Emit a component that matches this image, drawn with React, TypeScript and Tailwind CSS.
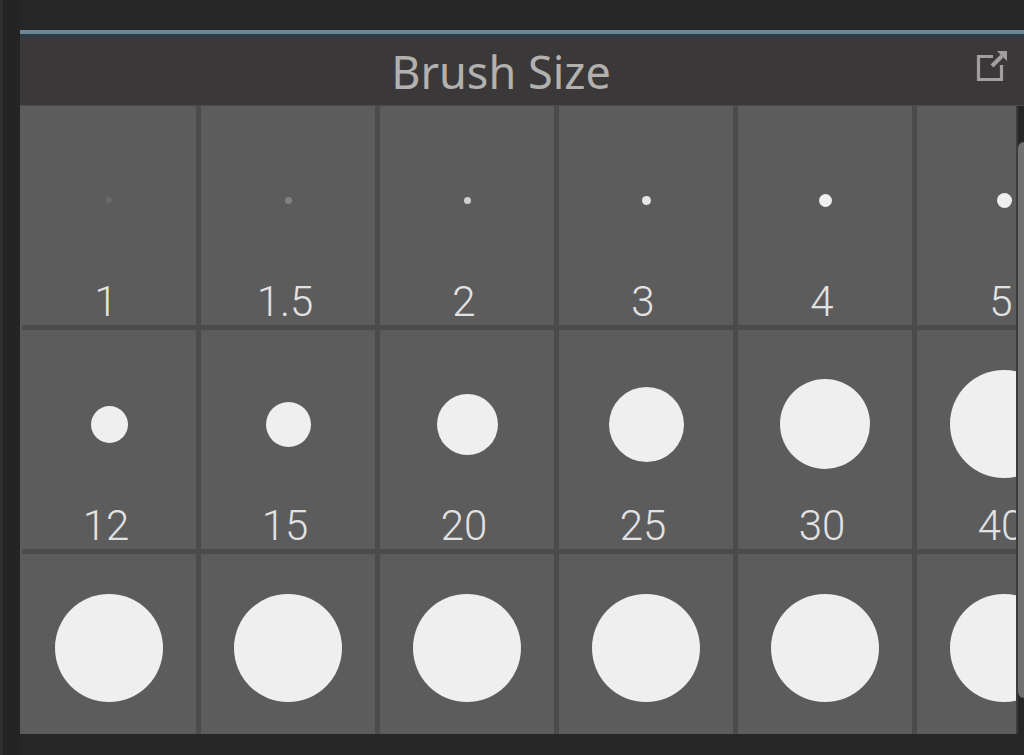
import React, { useState } from "react";

interface BrushPreset {
  id: string;
  label?: string;
  dot: string;
}

const presets: BrushPreset[] = [
  { id: "1", label: "1", dot: "size-[6px] bg-[#6c6c6c]" },
  { id: "1.5", label: "1.5", dot: "size-[7px] bg-[#828282]" },
  { id: "2", label: "2", dot: "size-[7px] bg-[#cfcfcf]" },
  { id: "3", label: "3", dot: "size-[9px] bg-[#e6e6e6]" },
  { id: "4", label: "4", dot: "size-[13px] bg-[#efefef]" },
  { id: "5", label: "5", dot: "size-[15px] bg-[#efefef]" },
  { id: "12", label: "12", dot: "size-[37px] bg-[#efefef]" },
  { id: "15", label: "15", dot: "size-[45px] bg-[#efefef]" },
  { id: "20", label: "20", dot: "size-[61px] bg-[#efefef]" },
  { id: "25", label: "25", dot: "size-[75px] bg-[#efefef]" },
  { id: "30", label: "30", dot: "size-[90px] bg-[#efefef]" },
  { id: "40", label: "40", dot: "size-[108px] bg-[#efefef]" },
  { id: "large-1", dot: "size-[108px] bg-[#efefef]" },
  { id: "large-2", dot: "size-[108px] bg-[#efefef]" },
  { id: "large-3", dot: "size-[108px] bg-[#efefef]" },
  { id: "large-4", dot: "size-[108px] bg-[#efefef]" },
  { id: "large-5", dot: "size-[108px] bg-[#efefef]" },
  { id: "large-6", dot: "size-[108px] bg-[#efefef]" },
];

interface BrushCellProps {
  preset: BrushPreset;
  selected: boolean;
  onSelect: (id: string) => void;
}

function BrushCell({ preset, selected, onSelect }: BrushCellProps) {
  return (
    <button
      type="button"
      aria-pressed={selected}
      aria-label={preset.label ? `Brush size ${preset.label}` : "Large brush size"}
      onClick={() => onSelect(preset.id)}
      className="flex h-[224px] flex-col border-r-5 border-b-5 border-[#4b4b49] bg-[#5c5c5c] pt-3"
    >
      <span className="flex h-[164px] w-full items-center justify-center">
        <span className={`rounded-full ${preset.dot}`} />
      </span>
      <span className="w-full pr-1.5 text-center text-[42px] leading-10 font-light text-[#e2e2e2]">
        {preset.label}
      </span>
    </button>
  );
}

function PopOutIcon() {
  return (
    <svg viewBox="0 0 32 32" className="size-8" fill="none" aria-hidden="true">
      <path d="M17 6.5H2.5V29.5H25.5V15" stroke="#a09e9e" strokeWidth="3.2" />
      <path d="M16 16L26 6" stroke="#a09e9e" strokeWidth="4" />
      <path d="M21 1H31V11Z" fill="#a09e9e" />
    </svg>
  );
}

export default function App() {
  const [selected, setSelected] = useState<string>("");

  return (
    <div className="flex h-screen overflow-hidden bg-[#262626] font-['Roboto','Liberation_Sans',sans-serif]">
      <div className="w-5 shrink-0 border-l-3 border-[#303030] bg-[#242424]" />
      <section className="flex min-w-0 flex-1 flex-col pt-[30px] pb-[21px]">
        <header className="flex h-[76px] shrink-0 items-center border-t-4 border-b border-t-[#6d8797] border-b-[#4b4b4b] bg-[#3a3838] shadow-[inset_0_4px_0_#2b3c47]">
          <h1 className="flex-1 pt-1 pl-1.5 text-center font-['Noto_Sans',sans-serif] text-[45px] leading-[60px] text-[#b3b1ae]">
            Brush Size
          </h1>
          <button type="button" aria-label="Pop out panel" className="mr-4 mb-2">
            <PopOutIcon />
          </button>
        </header>
        <div className="flex min-h-0 flex-1">
          <div className="min-w-0 flex-1 overflow-hidden bg-[#5c5c5c] pl-0.5">
            <div className="grid grid-cols-[repeat(6,179px)]">
              {presets.map((preset) => (
                <BrushCell
                  key={preset.id}
                  preset={preset}
                  selected={selected === preset.id}
                  onSelect={setSelected}
                />
              ))}
            </div>
          </div>
          <div className="flex w-2 shrink-0 flex-col border-l-2 border-[#3c3c3c] bg-[#262626] pt-9 pb-9">
            <div className="flex-1 rounded-tl-md rounded-bl-md bg-[#707070]" />
          </div>
        </div>
      </section>
    </div>
  );
}
